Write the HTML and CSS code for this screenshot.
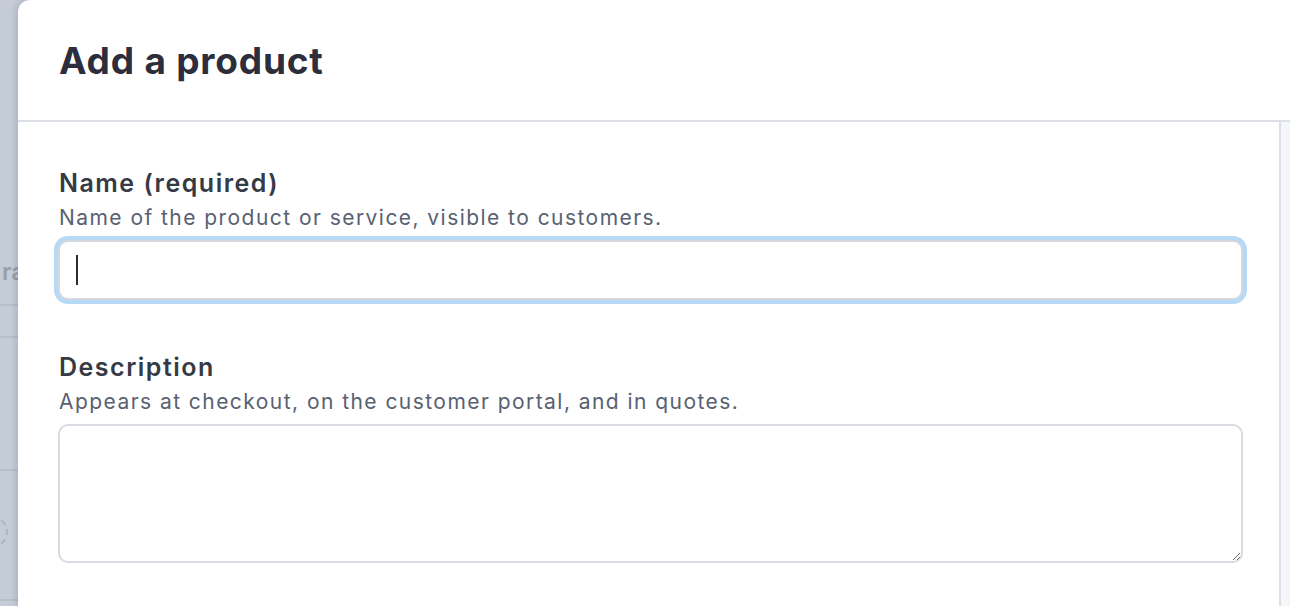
FILE: index.html
```html
<!DOCTYPE html>
<html lang="en">
<head>
<meta charset="utf-8">
<title>Add a product</title>
<link rel="stylesheet" href="styles.css">
</head>
<body>
<div class="backdrop">
  <div class="bg-row bg-row-1"><span class="bg-text">ra</span></div>
  <div class="bg-row bg-row-2"></div>
  <div class="bg-row bg-row-3"></div>
  <div class="bg-row bg-row-4"><span class="bg-circle"></span></div>
</div>
<div class="panel">
  <header class="panel-header">
    <h1 class="title">Add a product</h1>
  </header>
  <div class="panel-body">
    <div class="content">
      <div class="field">
        <div class="label">Name (required)</div>
        <div class="help">Name of the product or service, visible to customers.</div>
        <div class="input focused"><span class="caret"></span></div>
      </div>
      <div class="field">
        <div class="label">Description</div>
        <div class="help">Appears at checkout, on the customer portal, and in quotes.</div>
        <textarea class="textarea"></textarea>
      </div>
    </div>
    <div class="gutter"></div>
  </div>
</div>
</body>
</html>
```

FILE: styles.css
```css
* { box-sizing: border-box; }
html, body { margin: 0; padding: 0; height: 100%; }
body {
  display: flex;
  height: 606px;
  overflow: hidden;
  background: #c5ccd6;
  font-family: Inter, "Noto Sans", "Liberation Sans", sans-serif;
}
.backdrop {
  width: 18px;
  flex: none;
  overflow: hidden;
  background: #c5ccd6;
  display: flex;
  flex-direction: column;
}
.bg-row { border-bottom: 2px solid #b7bfca; flex: none; }
.bg-row-1 { height: 306px; padding-top: 257px; }
.bg-row-2 { height: 32px; }
.bg-row-3 { height: 133px; }
.bg-row-4 { height: 130px; padding-top: 45px; }
.bg-text {
  display: block;
  padding-left: 2px;
  font-size: 24px;
  line-height: 30px;
  font-weight: 600;
  color: #98a0ac;
  white-space: nowrap;
}
.bg-circle {
  display: block;
  width: 32px;
  height: 32px;
  margin-left: -24px;
  border: 2px dashed #aeb6c1;
  border-radius: 50%;
}
.panel {
  flex: 1;
  display: flex;
  flex-direction: column;
  background: #fff;
  border-top-left-radius: 12px;
  box-shadow: -2px 0 6px rgba(40, 50, 70, 0.18);
  position: relative;
}
.panel-header {
  height: 122px;
  flex: none;
  border-bottom: 2px solid #dde0e6;
  display: flex;
  align-items: center;
  padding-left: 41px;
}
.title {
  margin: 0;
  font-size: 37px;
  font-weight: 700;
  color: #2d2e3b;
  letter-spacing: 0.8px;
}
.panel-body {
  flex: 1;
  display: flex;
  min-height: 0;
}
.content {
  flex: 1;
  padding: 46px 36px 0 40px;
  display: flex;
  flex-direction: column;
  gap: 52px;
}
.gutter {
  width: 11px;
  flex: none;
  background: #f5f6f8;
  border-left: 2px solid #dde0e6;
}
.field { display: flex; flex-direction: column; }
.label {
  font-size: 25px;
  line-height: 30px;
  font-weight: 600;
  color: #353a44;
  letter-spacing: 1.5px;
  padding-left: 1px;
}
.help {
  margin-top: 6px;
  font-size: 21px;
  line-height: 28px;
  color: #596171;
  letter-spacing: 1.45px;
  padding-left: 1px;
}
.input {
  margin-top: 8px;
  height: 60px;
  border: 2px solid #d5d8dd;
  border-radius: 10px;
  display: flex;
  align-items: center;
  padding-left: 16px;
  background: #fff;
}
.input.focused {
  box-shadow: 0 0 0 4px #b6d9f6;
}
.caret {
  width: 2px;
  height: 30px;
  background: #2a2d36;
}
.textarea {
  margin-top: 8px;
  height: 139px;
  width: 100%;
  border: 2px solid #d8dce2;
  border-radius: 10px;
  resize: vertical;
  font: inherit;
  padding: 12px 16px;
  outline: none;
  background: #fff;
}
```
